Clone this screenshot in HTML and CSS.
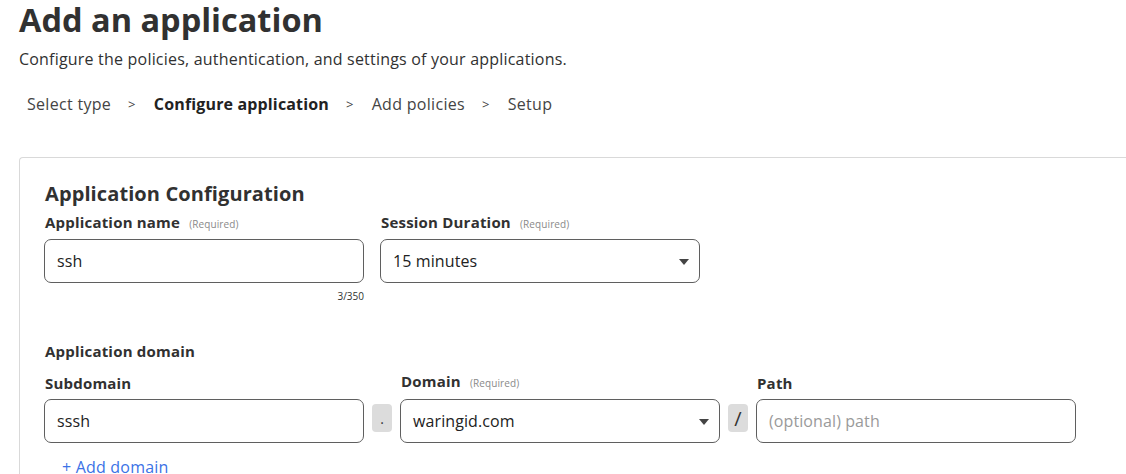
FILE: index.html
```html
<!DOCTYPE html>
<html>
<head>
<meta charset="utf-8">
<link rel="stylesheet" href="styles.css">
</head>
<body>
<div class="page">
  <h1 class="title">Add an application</h1>
  <p class="subtitle">Configure the policies, authentication, and settings of your applications.</p>
  <nav class="steps">
    <span class="step">Select type</span><span class="sep">&gt;</span>
    <span class="step active">Configure application</span><span class="sep">&gt;</span>
    <span class="step">Add policies</span><span class="sep">&gt;</span>
    <span class="step">Setup</span>
  </nav>
  <section class="card">
    <h2 class="card-title">Application Configuration</h2>
    <div class="row">
      <div class="field">
        <label class="label">Application name <span class="req">(Required)</span></label>
        <div class="input">ssh</div>
        <div class="counter">3/350</div>
      </div>
      <div class="field">
        <label class="label">Session Duration <span class="req">(Required)</span></label>
        <div class="input select">15 minutes<span class="caret"></span></div>
      </div>
    </div>
    <h3 class="group-title">Application domain</h3>
    <div class="row domain-row">
      <div class="field">
        <label class="label">Subdomain</label>
        <div class="input">sssh</div>
      </div>
      <div class="joiner">.</div>
      <div class="field">
        <label class="label">Domain <span class="req">(Required)</span></label>
        <div class="input select">waringid.com<span class="caret"></span></div>
      </div>
      <div class="joiner slash">/</div>
      <div class="field">
        <label class="label">Path</label>
        <div class="input placeholder">(optional) path</div>
      </div>
    </div>
    <a class="add-link">+ Add domain</a>
  </section>
</div>
</body>
</html>
```

FILE: styles.css
```css
* { box-sizing: border-box; }
html, body { margin: 0; padding: 0; background: #fff; }
body {
  font-family: "Open Sans", "Noto Sans", sans-serif;
  color: #313131;
  overflow: hidden;
}
.page { padding: 0 0 0 19px; }
.title {
  font-size: 32.5px;
  font-weight: 700;
  margin: 0;
  line-height: 40px;
}
.subtitle {
  margin: 8px 0 0 0;
  font-size: 16px;
  line-height: 22px;
  letter-spacing: 0.2px;
}
.steps {
  display: flex;
  align-items: center;
  margin: 23px 0 0 8px;
  font-size: 16px;
  line-height: 22px;
  color: #444;
  letter-spacing: 0.3px;
}
.step.active { font-weight: 700; color: #222; letter-spacing: 0.15px; }
.sep { font-size: 13px; margin: 0 18px 0 17px; color: #444; }
.card {
  margin-top: 42px;
  border: 1px solid #d9d9d9;
  border-right: none;
  border-radius: 4px 0 0 0;
  padding: 22px 0 0 24px;
  height: 330px;
}
.card-title {
  margin: 0 0 2px 1px;
  font-size: 20px;
  font-weight: 700;
  line-height: 28px;
  color: #313131;
  letter-spacing: 0.1px;
}
.row { display: flex; gap: 16px; }
.field { width: 320px; display: flex; flex-direction: column; }
.label {
  font-size: 15px;
  font-weight: 700;
  line-height: 24px;
  margin-bottom: 3px;
  padding-left: 1px;
  color: #313131;
  letter-spacing: 0.2px;
}
.req { font-size: 10px; font-weight: 400; color: #8a8a8a; margin-left: 5px; letter-spacing: 0.1px; }
.input {
  height: 44px;
  border: 1px solid #5f5f5f;
  border-radius: 7px;
  padding: 0 12px;
  display: flex;
  align-items: center;
  font-size: 16px;
  color: #222;
  position: relative;
  letter-spacing: 0.1px;
}
.input.placeholder { color: #9a9a9a; }
.caret {
  position: absolute;
  right: 10px;
  top: 19px;
  width: 0; height: 0;
  border-left: 5px solid transparent;
  border-right: 5px solid transparent;
  border-top: 6px solid #444;
}
.counter {
  text-align: right;
  font-size: 10px;
  line-height: 14px;
  margin-top: 6px;
  color: #313131;
}
.group-title {
  margin: 36px 0 0 1px;
  font-size: 15px;
  font-weight: 700;
  line-height: 24px;
  letter-spacing: 0.2px;
}
.domain-row { gap: 8px; margin-top: 6px; align-items: flex-end; }
.domain-row .label { margin-bottom: 4px; }
.joiner {
  width: 20px;
  height: 28px;
  background: #dcdcdc;
  border-radius: 4px;
  display: flex;
  align-items: center;
  justify-content: center;
  font-size: 14px;
  color: #333;
  margin-bottom: 11px;
}
.joiner.slash { font-size: 20px; }
.add-link {
  display: block;
  margin: 13px 0 0 18px;
  color: #3b72e6;
  font-size: 16px;
  line-height: 22px;
  letter-spacing: 0.2px;
}
```
